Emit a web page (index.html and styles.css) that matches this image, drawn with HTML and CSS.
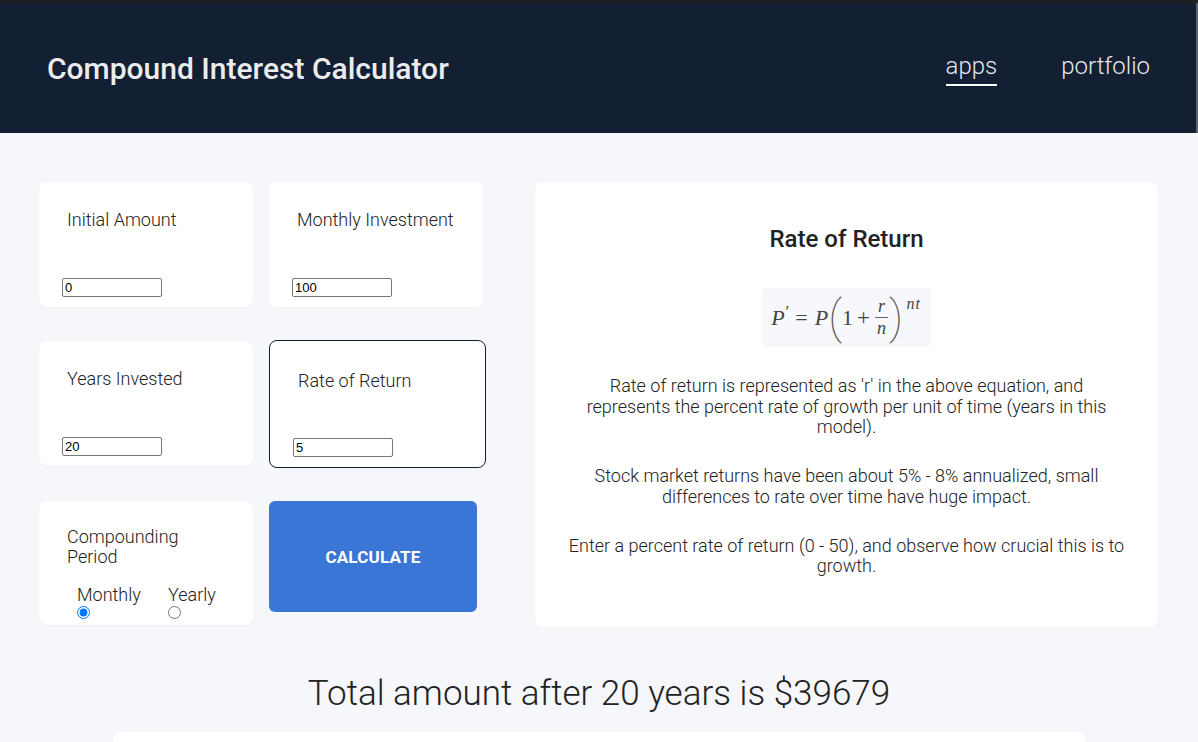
FILE: index.html
```html
<!DOCTYPE html>
<html lang="en">
<head>
<meta charset="utf-8">
<title>Compound Interest Calculator</title>
<link rel="stylesheet" href="styles.css">
</head>
<body>
<div class="topline"></div>
<header class="header">
  <h1 class="brand">Compound Interest Calculator</h1>
  <nav class="nav">
    <a class="nav-link active" href="#">apps</a>
    <a class="nav-link" href="#">portfolio</a>
  </nav>
</header>
<main class="main">
  <section class="controls">
    <div class="card">
      <label class="card-label">Initial Amount</label>
      <input class="num" type="text" value="0">
    </div>
    <div class="card">
      <label class="card-label">Monthly Investment</label>
      <input class="num" type="text" value="100">
    </div>
    <div class="card">
      <label class="card-label">Years Invested</label>
      <input class="num" type="text" value="20">
    </div>
    <div class="card card-active">
      <label class="card-label">Rate of Return</label>
      <input class="num" type="text" value="5">
    </div>
    <div class="card card-period">
      <label class="card-label narrow">Compounding Period</label>
      <div class="options">
        <label class="option option-first"><span>Monthly</span><input type="radio" name="period" checked></label>
        <label class="option"><span>Yearly</span><input type="radio" name="period"></label>
      </div>
    </div>
    <div class="btn-cell">
      <button class="calc">CALCULATE</button>
    </div>
  </section>
  <section class="info">
    <h2 class="info-title">Rate of Return</h2>
    <div class="formula">
      <span class="mi">P</span><span class="prime">′</span><span class="mo mo-eq">=</span><span class="mi">P</span><span class="paren">(</span><span class="mn">1</span><span class="mo mo-plus">+</span><span class="frac"><span class="num-part mi">r</span><span class="den-part mi">n</span></span><span class="paren">)</span><span class="sup mi">nt</span>
    </div>
    <p class="info-text">Rate of return is represented as 'r' in the above equation, and represents the percent rate of growth per unit of time (years in this model).</p>
    <p class="info-text">Stock market returns have been about 5% - 8% annualized, small differences to rate over time have huge impact.</p>
    <p class="info-text">Enter a percent rate of return (0 - 50), and observe how crucial this is to growth.</p>
  </section>
</main>
<h2 class="result">Total amount after 20 years is $39679</h2>
<div class="chart-card"></div>
</body>
</html>
```

FILE: styles.css
```css
* { box-sizing: border-box; }
html, body { margin: 0; padding: 0; }
body {
  background: #f5f7fb;
  font-family: Roboto, "Noto Sans", Arial, sans-serif;
  color: #222;
  overflow: hidden;
  height: 742px;
}
.topline { height: 3px; background: #1f2023; }
.header {
  height: 130px;
  background: #131f33;
  border-right: 2px solid #5d6470;
  display: flex;
  align-items: center;
  justify-content: space-between;
  padding: 0 46px 0 47px;
}
.brand {
  margin: 0;
  color: #ececec;
  font-size: 30px;
  font-weight: 500;
  letter-spacing: 0;
}
.nav { display: flex; gap: 64px; margin-top: 2px; }
.nav-link {
  color: #e6e8ec;
  text-decoration: none;
  font-size: 24px;
  font-weight: 300;
  padding-bottom: 4px;
  border-bottom: 2px solid transparent;
}
.nav-link.active { border-bottom-color: #ffffff; }

.main {
  display: flex;
  gap: 49px;
  padding: 49px 40px 0 39px;
}
.controls {
  display: grid;
  grid-template-columns: 214px 216px;
  grid-template-rows: 125px 125px 125px;
  column-gap: 16px;
  row-gap: 34px;
  width: 447px;
  padding-bottom: 2px;
  flex: none;
}
.card {
  background: #fff;
  border-radius: 8px;
  box-shadow: 0 1px 2px rgba(0,0,0,0.03);
  padding: 28px 10px 10px 23px;
  display: flex;
  flex-direction: column;
  justify-content: space-between;
  align-items: flex-start;
  width: 214px;
}
.card-label {
  font-size: 18px;
  font-weight: 300;
  line-height: 20px;
  margin-left: 5px;
  color: #222;
}
.card-label.narrow { max-width: 130px; }
.num {
  width: 100px;
  height: 19px;
  border: 1px solid #767676;
  border-radius: 2px;
  padding: 0 2px;
  font-family: "Liberation Sans", Arial, sans-serif;
  font-size: 13px;
  color: #000;
  background: #fff;
}
.card-active {
  width: 217px;
  height: 128px;
  margin-top: -1px;
  border: 1px solid #131f33;
  padding: 30px 10px 10px 23px;
}
.card-period {
  justify-content: flex-start;
  padding: 26px 10px 8px 23px;
  margin-top: 1px;
}
.options {
  display: flex;
  margin-top: 18px;
  margin-left: 15px;
}
.option {
  display: flex;
  flex-direction: column;
  align-items: flex-start;
  font-size: 18px;
  font-weight: 300;
  line-height: 20px;
}
.option-first { width: 91px; }
.option input {
  margin: 1px 0 0 0;
  width: 13px;
  height: 13px;
}
.btn-cell { display: flex; align-items: flex-start; margin-top: 1px; }
.calc {
  width: 208px;
  height: 111px;
  border: none;
  border-radius: 6px;
  background: #3a76d6;
  color: #fff;
  font-family: Roboto, Arial, sans-serif;
  font-size: 17px;
  font-weight: 700;
  letter-spacing: 0.2px;
}

.info {
  flex: 1;
  background: #fff;
  border-radius: 8px;
  padding: 44px 32px 20px 32px;
  text-align: center;
  display: flex;
  flex-direction: column;
  align-items: center;
}
.info-title {
  margin: 0;
  font-size: 24px;
  font-weight: 500;
  line-height: 26px;
  color: #222;
}
.formula {
  margin-top: 36px;
  background: #f7f8fc;
  border-radius: 4px;
  width: 169px;
  height: 59px;
  display: flex;
  align-items: center;
  justify-content: center;
  font-family: "Liberation Serif", "DejaVu Serif", serif;
  font-size: 22px;
  line-height: 22px;
  color: #444;
  padding: 0 1px 0 0;
}
.formula .mi { font-style: italic; }
.formula .prime {
  font-size: 17px;
  align-self: flex-start;
  margin-top: 13px;
  margin-left: 1px;
}
.formula .mo-eq { margin: 0 7px 0 6px; font-size: 22px; }
.formula .mo-plus { margin: 0 4px; font-size: 23px; }
.formula .paren {
  font-family: Roboto, sans-serif;
  font-weight: 100;
  font-size: 47px;
  line-height: 47px;
  margin-top: -3px;
  color: #555;
}
.formula .frac {
  display: inline-flex;
  flex-direction: column;
  align-items: center;
  font-size: 18px;
  line-height: 19px;
  margin: 0 1px;
}
.formula .num-part { border-bottom: 1px solid #666; padding: 0 3px 1px 3px; }
.formula .den-part { padding-top: 1px; }
.formula .sup {
  font-size: 16px;
  line-height: 16px;
  letter-spacing: 1px;
  align-self: flex-start;
  margin-top: 8px;
  margin-left: 3px;
}

.info-text {
  margin: 28.5px 0 0 0;
  font-size: 18px;
  font-weight: 300;
  line-height: 20.5px;
  color: #222;
}
.formula + .info-text { margin-top: 29px; }

.result {
  margin: 46px 0 0 0;
  text-align: center;
  font-size: 35px;
  font-weight: 300;
  line-height: 41px;
  color: #222;
}
.chart-card {
  margin: 18px auto 0 auto;
  width: 972px;
  height: 200px;
  background: #fff;
  border-radius: 8px;
}
```
